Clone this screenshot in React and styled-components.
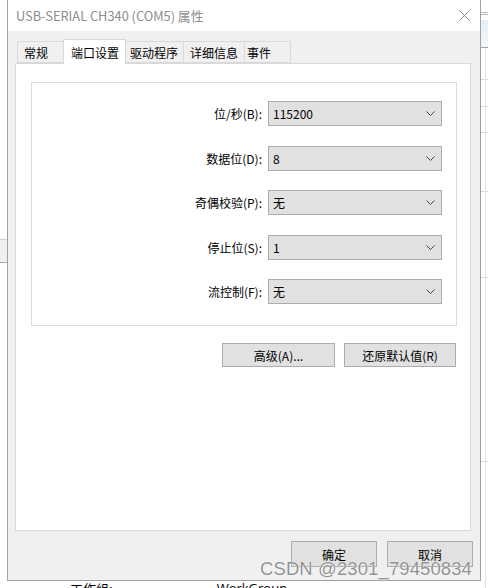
import React from "react";
import styled, { createGlobalStyle } from "styled-components";

const GlobalStyle = createGlobalStyle`
  html, body {
    margin: 0;
    padding: 0;
    background: #fff;
  }
  body {
    font-family: "Noto Sans CJK SC", "Liberation Sans", sans-serif;
    font-size: 12px;
    color: #000;
  }
`;

const Page = styled.div`
  position: relative;
  width: 488px;
  height: 588px;
  overflow: hidden;
  background: #fff;
  display: grid;
  grid-template-columns: 7px 474px 7px;
  grid-template-rows: 581px 1fr;
`;

const LeftStrip = styled.div`
  grid-column: 1;
  grid-row: 1 / 3;
  background:
    linear-gradient(#d0d0d0, #d0d0d0) 0 239px / 100% 1px no-repeat,
    linear-gradient(#a8a8a8, #a8a8a8) 0 262px / 100% 1px no-repeat,
    linear-gradient(#f0f0f0, #f0f0f0) 0 240px / 100% 22px no-repeat,
    #fff;
`;

const RightStrip = styled.div`
  grid-column: 3;
  grid-row: 1 / 3;
  background:
    linear-gradient(#b8b8b8, #b8b8b8) 0 12px / 100% 1px no-repeat,
    linear-gradient(#b8b8b8, #b8b8b8) 0 14px / 100% 1px no-repeat,
    linear-gradient(#a0a0a0, #a0a0a0) 0 47px / 100% 1px no-repeat,
    linear-gradient(#dcdcdc, #dcdcdc) 0 79px / 100% 1px no-repeat,
    linear-gradient(#dcdcdc, #dcdcdc) 0 106px / 100% 1px no-repeat,
    linear-gradient(#dcdcdc, #dcdcdc) 0 132px / 100% 1px no-repeat,
    linear-gradient(#dcdcdc, #dcdcdc) 0 191px / 100% 1px no-repeat,
    linear-gradient(#dcdcdc, #dcdcdc) 0 277px / 100% 1px no-repeat,
    linear-gradient(#dcdcdc, #dcdcdc) 0 461px / 100% 1px no-repeat,
    linear-gradient(#e3e3e3, #e3e3e3) 4px 47px / 1px 100% no-repeat,
    linear-gradient(#e6edf5, #f4f7fa) 0 20px / 100% 27px no-repeat,
    #fff;
`;

const Window = styled.div`
  grid-column: 2;
  grid-row: 1;
  display: flex;
  flex-direction: column;
  background: #f0f0f0;
  border: 1px solid #a0a0a0;
  border-top: none;
`;

const TitleBar = styled.div`
  height: 31px;
  flex: none;
  display: flex;
  align-items: center;
  justify-content: space-between;
  padding: 0 10px 0 8px;
  background: #fff;
  color: #8e8e8e;
  font-size: 12.8px;
`;

const Body = styled.div`
  flex: 1;
  display: flex;
  flex-direction: column;
  padding: 9px 9px 0 7px;
`;

const TabStrip = styled.div`
  display: flex;
  align-items: flex-end;
  height: 24px;
  padding-left: 2px;
  position: relative;
  z-index: 1;
  margin-bottom: -1px;
`;

const Tab = styled.div`
  box-sizing: border-box;
  width: ${(p) => p.$w}px;
  height: ${(p) => (p.$active ? 25 : 22)}px;
  padding-left: ${(p) => p.$pl}px;
  margin-bottom: ${(p) => (p.$active ? 0 : 1)}px;
  display: flex;
  align-items: center;
  border: 1px solid #d9d9d9;
  border-bottom: ${(p) => (p.$active ? "none" : "1px solid #d9d9d9")};
  border-left: ${(p) => (p.$first || p.$active ? "1px solid #d9d9d9" : "none")};
  border-right: ${(p) => (p.$beforeActive ? "none" : "1px solid #d9d9d9")};
  background: ${(p) => (p.$active ? "#fff" : "#f0f0f0")};
  padding-top: ${(p) => (p.$active ? 0 : 1)}px;
`;

const Panel = styled.div`
  box-sizing: border-box;
  height: 468px;
  background: #fff;
  border: 1px solid #d9d9d9;
  padding: 18px 0 0 15px;
  display: flex;
  flex-direction: column;
`;

const Group = styled.div`
  box-sizing: border-box;
  width: 426px;
  height: 244px;
  border: 1px solid #dcdcdc;
  padding: 18px 14px 0 0;
  display: flex;
  flex-direction: column;
  align-items: flex-end;
  gap: 19.5px;
`;

const Row = styled.div`
  display: flex;
  align-items: center;
  gap: 6px;
`;

const Label = styled.span`
  text-align: right;
`;

const Select = styled.div`
  box-sizing: border-box;
  width: 174px;
  height: 25px;
  display: flex;
  align-items: center;
  justify-content: space-between;
  padding: 0 6px 0 4px;
  background: #e1e1e1;
  border: 1px solid #adadad;
`;

const Actions = styled.div`
  display: flex;
  justify-content: flex-end;
  gap: 9px;
  margin-top: 17px;
  padding-right: 14px;
`;

const Button = styled.div`
  box-sizing: border-box;
  width: ${(p) => p.$w}px;
  height: ${(p) => p.$h}px;
  display: flex;
  align-items: center;
  justify-content: center;
  background: #e1e1e1;
  border: 1px solid #adadad;
`;

const Footer = styled.div`
  display: flex;
  justify-content: flex-end;
  gap: 10px;
  margin: 10px -2px 0 0;
`;

const Below = styled.div`
  grid-column: 2;
  grid-row: 2;
  display: flex;
  padding-left: 63px;
  font-size: 13px;
  line-height: 1;
  margin-top: 1px;
`;

const BelowValue = styled.span`
  margin-left: 104px;
  font-family: "Open Sans", "Noto Sans CJK SC", sans-serif;
`;

const Watermark = styled.div`
  position: absolute;
  left: 260px;
  top: 558px;
  font-family: "Liberation Sans", sans-serif;
  font-size: 18.5px;
  letter-spacing: 0.1px;
  color: rgba(125, 125, 125, 0.85);
  text-shadow: 0 0 1px #fff, 0 0 1px #fff;
  white-space: nowrap;
`;

const Chevron = () => (
  <svg width="9" height="5" viewBox="0 0 9 5">
    <path d="M0.5 0.5 L4.5 4.5 L8.5 0.5" fill="none" stroke="#444" strokeWidth="1" />
  </svg>
);

const CloseIcon = () => (
  <svg width="11" height="11" viewBox="0 0 11 11">
    <path d="M0.5 0.5 L10.5 10.5 M10.5 0.5 L0.5 10.5" stroke="#8a8a8a" strokeWidth="1" />
  </svg>
);

const tabs = [
  { label: "常规", w: 46, pl: 6, first: true },
  { label: "端口设置", w: 63, pl: 7, active: true },
  { label: "驱动程序", w: 58, pl: 4 },
  { label: "详细信息", w: 61, pl: 6 },
  { label: "事件", w: 46, pl: 2 },
];

const fields = [
  { label: "位/秒(B):", value: "115200" },
  { label: "数据位(D):", value: "8" },
  { label: "奇偶校验(P):", value: "无" },
  { label: "停止位(S):", value: "1" },
  { label: "流控制(F):", value: "无" },
];

export default function App() {
  return (
    <Page>
      <GlobalStyle />
      <LeftStrip />
      <Window>
        <TitleBar>
          <span>USB-SERIAL CH340 (COM5) 属性</span>
          <CloseIcon />
        </TitleBar>
        <Body>
          <TabStrip>
            {tabs.map((t, i) => (
              <Tab
                key={t.label}
                $w={t.w}
                $pl={t.pl}
                $active={t.active}
                $first={t.first}
                $beforeActive={tabs[i + 1] && tabs[i + 1].active}
              >
                {t.label}
              </Tab>
            ))}
          </TabStrip>
          <Panel>
            <Group>
              {fields.map((f) => (
                <Row key={f.label}>
                  <Label>{f.label}</Label>
                  <Select>
                    <span>{f.value}</span>
                    <Chevron />
                  </Select>
                </Row>
              ))}
            </Group>
            <Actions>
              <Button $w={113} $h={24}>高级(A)...</Button>
              <Button $w={112} $h={24}>还原默认值(R)</Button>
            </Actions>
          </Panel>
          <Footer>
            <Button $w={86} $h={26}>确定</Button>
            <Button $w={86} $h={26}>取消</Button>
          </Footer>
        </Body>
      </Window>
      <RightStrip />
      <Below>
        <span>工作组:</span>
        <BelowValue>WorkGroup</BelowValue>
      </Below>
      <Watermark>CSDN @2301_79450834</Watermark>
    </Page>
  );
}
